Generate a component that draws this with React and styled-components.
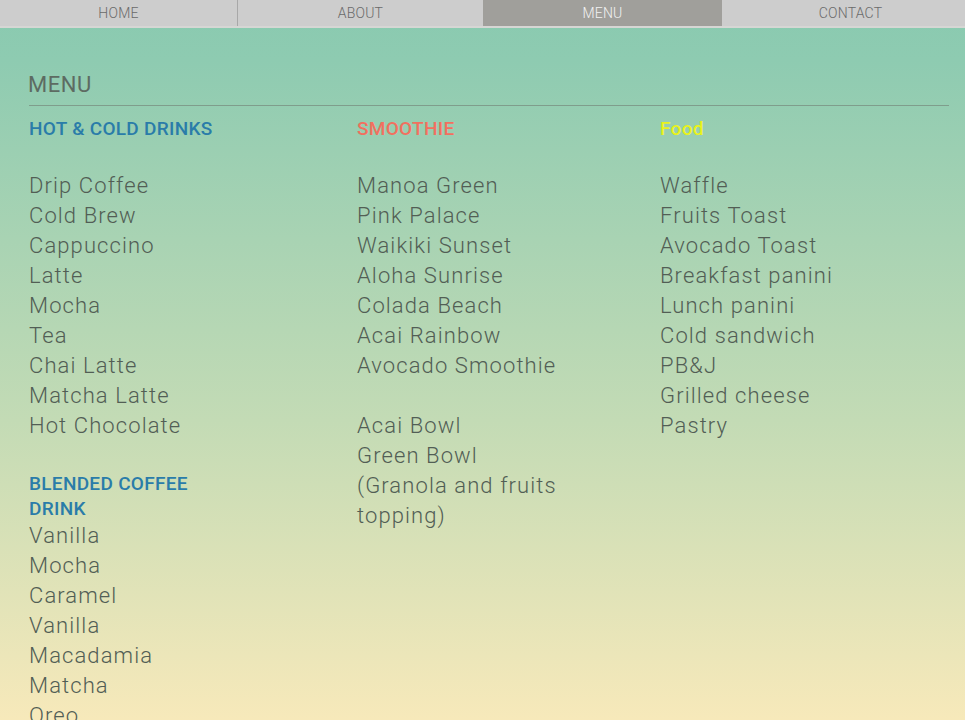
import React from "react";
import styled, { createGlobalStyle } from "styled-components";

const GlobalStyle = createGlobalStyle`
  html, body {
    margin: 0;
    padding: 0;
  }
  body {
    font-family: Roboto, "Liberation Sans", sans-serif;
    background: #f7e9ba;
  }
`;

const tabs = [
  { label: "HOME", width: "238px" },
  { label: "ABOUT", width: "245px" },
  { label: "MENU", width: "239px", active: true },
  { label: "CONTACT", width: "1fr", shift: true },
];

const columns = [
  {
    width: "328px",
    max: "205px",
    sections: [
      {
        title: "HOT & COLD DRINKS",
        color: "#2a7ca9",
        gap: true,
        items: [
          "Drip Coffee",
          "Cold Brew",
          "Cappuccino",
          "Latte",
          "Mocha",
          "Tea",
          "Chai Latte",
          "Matcha Latte",
          "Hot Chocolate",
        ],
      },
      {
        title: "BLENDED COFFEE DRINK",
        color: "#2a7ca9",
        items: ["Vanilla", "Mocha", "Caramel", "Vanilla", "Macadamia", "Matcha", "Oreo"],
      },
    ],
  },
  {
    width: "303px",
    max: "225px",
    sections: [
      {
        title: "SMOOTHIE",
        color: "#f2705f",
        gap: true,
        items: [
          "Manoa Green",
          "Pink Palace",
          "Waikiki Sunset",
          "Aloha Sunrise",
          "Colada Beach",
          "Acai Rainbow",
          "Avocado Smoothie",
        ],
      },
      {
        items: ["Acai Bowl", "Green Bowl", "(Granola and fruits topping)"],
      },
    ],
  },
  {
    width: "1fr",
    max: "260px",
    sections: [
      {
        title: "Food",
        color: "#e9f21c",
        gap: true,
        items: [
          "Waffle",
          "Fruits Toast",
          "Avocado Toast",
          "Breakfast panini",
          "Lunch panini",
          "Cold sandwich",
          "PB&J",
          "Grilled cheese",
          "Pastry",
        ],
      },
    ],
  },
];

export default function App() {
  return (
    <>
      <GlobalStyle />
      <Page>
        <Nav $cols={tabs.map((t) => t.width).join(" ")}>
          {tabs.map((t, i) => (
            <Tab key={t.label} $active={t.active} $divider={i === 0} $shift={t.shift}>
              {t.label}
            </Tab>
          ))}
        </Nav>
        <Content>
          <PageTitle>MENU</PageTitle>
          <Rule />
          <Columns $cols={columns.map((c) => c.width).join(" ")}>
            {columns.map((col, ci) => (
              <Column key={ci} $max={col.max}>
                {col.sections.map((s, si) => (
                  <Section key={si} $first={si === 0}>
                    {s.title && (
                      <Heading $color={s.color} $gap={s.gap}>
                        {s.title}
                      </Heading>
                    )}
                    {s.items.map((item, ii) => (
                      <Item key={ii}>{item}</Item>
                    ))}
                  </Section>
                ))}
              </Column>
            ))}
          </Columns>
        </Content>
      </Page>
    </>
  );
}

const Page = styled.div`
  height: 720px;
  overflow: hidden;
  background: linear-gradient(180deg, #89cab0 0px, #8ecbb1 60px, #c3dbb5 420px, #f7e9ba 720px);
`;

const Nav = styled.nav`
  display: grid;
  grid-template-columns: ${(p) => p.$cols};
  height: 26px;
  background: #cdcdcd;
  border-bottom: 2px solid #d6d6d4;
`;

const Tab = styled.div`
  display: flex;
  align-items: center;
  justify-content: center;
  padding-left: ${(p) => (p.$shift ? "14px" : "0")};
  font-size: 14px;
  font-weight: 300;
  color: ${(p) => (p.$active ? "#f2f2f2" : "#6a6a6a")};
  background: ${(p) => (p.$active ? "#a09f9b" : "transparent")};
  border-right: ${(p) => (p.$divider ? "1px solid #a8a8a8" : "none")};
  letter-spacing: 0.2px;
`;

const Content = styled.main`
  padding: 0 16px 0 29px;
`;

const PageTitle = styled.h1`
  margin: 0 0 0 -1px;
  padding-top: 42px;
  font-size: 22px;
  font-weight: 400;
  line-height: 30px;
  color: #5d6b62;
  letter-spacing: 0.5px;
`;

const Rule = styled.hr`
  margin: 5px 0 0 0;
  border: none;
  border-top: 1px solid #7f9d8c;
  height: 0;
`;

const Columns = styled.div`
  display: grid;
  grid-template-columns: ${(p) => p.$cols};
  padding-top: 10px;
`;

const Column = styled.div`
  display: flex;
  flex-direction: column;
  max-width: ${(p) => p.$max};
`;

const Section = styled.section`
  margin-top: ${(p) => (p.$first ? "0" : "30px")};
`;

const Heading = styled.h2`
  margin: 0 0 ${(p) => (p.$gap ? "30px" : "0")} 0;
  font-size: 19px;
  font-weight: 500;
  line-height: 25px;
  color: ${(p) => p.$color};
  letter-spacing: 0.3px;
`;

const Item = styled.div`
  font-size: 22px;
  font-weight: 300;
  line-height: 30px;
  color: #525e55;
  letter-spacing: 1.1px;
`;
